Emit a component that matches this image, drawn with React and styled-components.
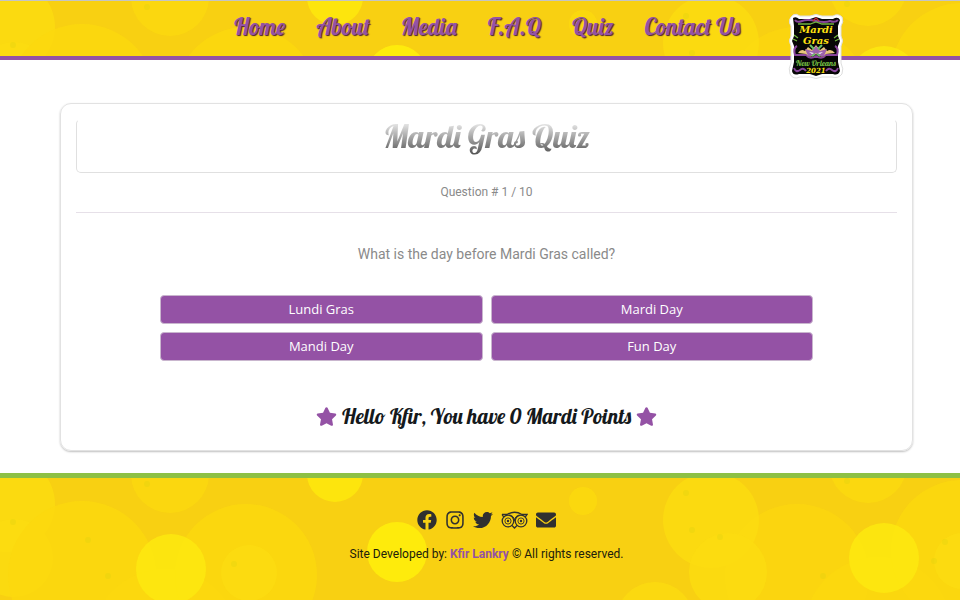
import React from "react";
import styled, { createGlobalStyle } from "styled-components";
import {
  FaFacebook,
  FaInstagram,
  FaTwitter,
  FaEnvelope,
  FaStar,
} from "react-icons/fa";

const script = `Lobster, "Liberation Serif", serif`;
const purple = "#9452a5";

const GlobalStyle = createGlobalStyle`
  * { box-sizing: border-box; }
  body {
    margin: 0;
    background: #fff;
    color: #212529;
    font-family: Roboto, sans-serif;
  }
  h1, h2, p, ul { margin: 0; padding: 0; }
`;

const Page = styled.div`
  display: flex;
  flex-direction: column;
  min-height: 100vh;
`;

const BubbleSvg = styled.svg`
  position: absolute;
  inset: 0;
  width: 100%;
  height: 100%;
  z-index: -1;
`;

const Header = styled.header`
  position: relative;
  z-index: 1;
  display: flex;
  align-items: center;
  justify-content: center;
  height: 60px;
  padding: 0 0 4px 14px;
  background: #f8d012;
  border-top: 1px solid #c4c4c4;
  border-bottom: 4px solid ${purple};
`;

const NavList = styled.ul`
  display: flex;
  align-items: center;
  gap: 31px;
  list-style: none;
`;

const NavLink = styled.a`
  color: ${purple};
  font: 23px/30px ${script};
  text-decoration: none;
  text-shadow: 1px 1px 1px #4a2038;
  white-space: nowrap;
`;

const LogoLink = styled.a`
  position: absolute;
  top: 12px;
  right: 116px;
  width: 56px;
  height: 66px;
`;

const Main = styled.main`
  padding: 43px 47px 22px 60px;
`;

const Card = styled.section`
  display: flex;
  flex-direction: column;
  padding: 15px;
  border: 1px solid #e2e2e2;
  border-radius: 11px;
  box-shadow: 0 1px 2px 0 rgba(0, 0, 0, 0.25);
  text-align: center;
`;

const TitleBox = styled.div`
  display: flex;
  align-items: flex-start;
  justify-content: center;
  height: 54px;
  border: 1px solid #e0e0e0;
  border-top-color: transparent;
  border-radius: 5px;
`;

const Title = styled.h1`
  padding: 0 4px 4px;
  font: 32px/32px ${script};
  background: linear-gradient(#e6e6e6 10%, #555 95%);
  background-clip: text;
  -webkit-background-clip: text;
  color: transparent;
`;

const Counter = styled.p`
  padding: 10px 0 11px;
  border-bottom: 1px solid #e6e0e8;
  color: #8a8a8a;
  font-size: 12px;
  line-height: 18px;
`;

const Question = styled.h2`
  padding: 31px 0;
  color: #8a8a8a;
  font-size: 14px;
  font-weight: 400;
  line-height: 20px;
`;

const Options = styled.div`
  display: grid;
  grid-template-columns: 1fr 1fr;
  gap: 8px;
  padding: 0 84px;
`;

const Option = styled.button`
  height: 29px;
  padding: 0 0 2px;
  border: 1px solid #c9b6ce;
  border-radius: 4px;
  background: ${purple};
  color: #fff;
  font: 13px/20px "Open Sans", "Noto Sans", sans-serif;
  cursor: pointer;
`;

const Score = styled.p`
  display: flex;
  align-items: center;
  justify-content: center;
  gap: 5px;
  padding: 41px 0 5px;
  color: #15191c;
  font: 21px/28px ${script};

  svg {
    color: ${purple};
    font-size: 21px;
  }
`;

const Footer = styled.footer`
  position: relative;
  z-index: 1;
  flex: 1;
  display: flex;
  flex-direction: column;
  align-items: center;
  gap: 15px;
  padding: 31px 0 35px 13px;
  border-top: 5px solid #8dc045;
  background: #f8d012;
`;

const Socials = styled.div`
  display: flex;
  align-items: center;
  gap: 8px;
  height: 21px;
`;

const SocialLink = styled.a`
  display: flex;
  color: #303030;
  font-size: 20px;
`;

const Credit = styled.p`
  color: #20200c;
  font-size: 12px;
  line-height: 18px;
`;

const AuthorLink = styled.a`
  color: ${purple};
  font-weight: 700;
  text-decoration: none;
`;

const bubbles = [
  [7, 26, 48, "#fbdc10"],
  [14, 80, 39, "#fbdc10"],
  [82, 97, 74, "#fcd80e"],
  [170, -4, 39, "#fcd80f"],
  [165, 165, 74, "#fcd80e"],
  [246, 97, 71, "#fcd80e"],
  [171, 91, 35, "#fde90f"],
  [249, 95, 28, "#fbdc10"],
  [335, -4, 28, "#fee90d"],
  [397, 74, 30, "#fff00c"],
  [583, 23, 14, "#fcd90e"],
  [655, 143, 39, "#fbdb10"],
  [797, 98, 72, "#fcd60f"],
  [711, 42, 48, "#fbdc10"],
  [728, 94, 39, "#fbdc10"],
  [868, -14, 39, "#fbd90f"],
  [878, 153, 74, "#fcd80e"],
  [962, 73, 71, "#fcd80e"],
  [884, 80, 35, "#fde90f"],
  [962, 83, 28, "#fbdc10"],
];

const specks = [
  [13, 44],
  [88, 62],
  [108, 98],
  [147, 6],
  [234, 86],
  [686, 15],
  [692, 52],
  [720, 59],
  [823, 98],
  [847, 3],
  [945, 64],
  [934, 83],
];

function Bubbles() {
  return (
    <BubbleSvg aria-hidden="true">
      {bubbles.map(([x, y, r, fill]) => (
        <circle key={`${x}-${y}`} cx={x} cy={y} r={r} fill={fill} opacity="0.85" />
      ))}
      {specks.map(([x, y]) => (
        <circle key={`${x}-${y}`} cx={x} cy={y} r="3" fill="#d9cf10" opacity="0.3" />
      ))}
    </BubbleSvg>
  );
}

const LogoText = styled.text`
  font-family: "DejaVu Serif", serif;
  font-weight: bold;
  font-style: italic;
  text-anchor: middle;
`;

const LogoScript = styled(LogoText)`
  font-family: ${script};
  font-weight: normal;
  font-style: normal;
`;

function Logo() {
  return (
    <svg viewBox="0 0 56 66" width="56" height="66" role="img" aria-label="Mardi Gras New Orleans 2021">
      <path
        d="M5 2 Q8 0 12 3 L22 3 Q28 0 34 3 L45 3 Q50 0 54 4 Q56 9 53 13 V23 Q56 28 53 33 V50 Q56 56 54 61 Q50 66 44 64 L34 64 Q28 67 22 64 L12 64 Q5 67 2 61 Q0 56 3 50 V33 Q0 28 3 23 V13 Q-1 7 5 2Z"
        fill="#fff"
        stroke="#dedede"
        strokeWidth="1"
      />
      <path
        d="M5 5 Q8 3 11 6 H22 L28 4 L34 6 H45 Q50 3 52 7 L50 13 V23 L52 28 L50 33 V49 L52 58 Q50 63 45 61 H34 L28 63 L22 61 H11 Q5 63 4 58 L6 49 V33 L4 28 L6 23 V13 Z"
        fill="#060606"
      />
      <g fill="none" strokeWidth="1.3">
        <path d="M7 7 Q9 10 14 8 T28 8 T42 8 Q47 10 50 7" stroke="#88459b" strokeWidth="2" />
        <path d="M10 11 H22 L28 9 L34 11 H46" stroke="#70b33e" />
        <path d="M25 8 L28 5 L31 8" stroke="#c12e38" />
        <path d="M5 26 L9 28 M6 22 L10 25 M51 26 L47 28 M50 22 L46 25" stroke="#70b33e" />
        <path d="M9 33 Q5 35 7 42 H18 Q22 47 28 43 Q34 47 38 42 H49 Q51 35 47 33" stroke="#88459b" strokeWidth="2" />
        <path d="M6 55 Q8 60 12 57 Q15 54 18 58 M50 55 Q48 60 44 57 Q41 54 38 58" stroke="#88459b" strokeWidth="2" />
      </g>
      <LogoText x="28" y="20" fontSize="10" fill="#ffe111">Mardi</LogoText>
      <LogoText x="28" y="31" fontSize="10" fill="#ffe111">Gras</LogoText>
      <path d="M10 40 Q13 35 17 38 L20 34 L24 37 L28 32 L32 37 L36 34 L39 38 Q43 35 47 40 L38 41 Q34 46 28 41 Q22 46 18 41 Z" fill="#e9c67d" />
      <path d="M17 36 L24 38 L28 33 L32 38 L39 36 L36 43 Q31 44 28 40 Q24 44 20 43 Z" fill="#9d62ad" />
      <path d="M22 32 L26 36 M34 32 L30 36 M24 43 L27 41 M32 43 L29 41" stroke="#6bc06a" strokeWidth="2" />
      <path d="M21 39 l5 1 -2 1Z M35 39 l-5 1 2 1Z" fill="#fff" />
      <LogoScript x="28" y="53" fontSize="8" fill="#72bd43">New Orleans</LogoScript>
      <LogoText x="28" y="60" fontSize="7" fill="#ffe111">2021</LogoText>
    </svg>
  );
}

function TripadvisorIcon() {
  return (
    <svg width="27" height="18" viewBox="0 0 27 18" fill="none" stroke="currentColor" aria-hidden="true">
      <path d="M1 3.500 H6 Q13.500 -1 21 3.500 H26 L24 6.500" strokeWidth="1.300" />
      <path d="M1 3.500 L3 6.500 M11 14.500 L13.500 17 L16 14.500" strokeWidth="1.300" />
      <circle cx="7" cy="10" r="5.800" strokeWidth="1.300" />
      <circle cx="20" cy="10" r="5.800" strokeWidth="1.300" />
      <circle cx="7" cy="10" r="3.100" strokeWidth="0.900" />
      <circle cx="20" cy="10" r="3.100" strokeWidth="0.900" />
      <circle cx="7" cy="10" r="1.200" fill="currentColor" stroke="none" />
      <circle cx="20" cy="10" r="1.200" fill="currentColor" stroke="none" />
      <path d="M8.500 4 Q13 4.500 13.500 10 Q14 4.500 18.500 4" strokeWidth="1" />
    </svg>
  );
}

const pages = ["Home", "About", "Media", "F.A.Q", "Quiz", "Contact Us"];
const answers = ["Lundi Gras", "Mardi Day", "Mandi Day", "Fun Day"];
const socials = [
  ["Facebook", <FaFacebook />],
  ["Instagram", <FaInstagram />],
  ["Twitter", <FaTwitter />],
  ["Tripadvisor", <TripadvisorIcon />],
  ["Email", <FaEnvelope />],
];

export default function App() {
  return (
    <Page>
      <GlobalStyle />
      <Header>
        <Bubbles />
        <nav>
          <NavList>
            {pages.map((page) => (
              <li key={page}>
                <NavLink href="#">{page}</NavLink>
              </li>
            ))}
          </NavList>
        </nav>
        <LogoLink href="#" aria-label="Mardi Gras home">
          <Logo />
        </LogoLink>
      </Header>
      <Main>
        <Card>
          <TitleBox>
            <Title>Mardi Gras Quiz</Title>
          </TitleBox>
          <Counter>Question # 1 / 10</Counter>
          <Question>What is the day before Mardi Gras called?</Question>
          <Options>
            {answers.map((answer) => (
              <Option key={answer} type="button">
                {answer}
              </Option>
            ))}
          </Options>
          <Score>
            <FaStar />
            <span>Hello Kfir, You have 0 Mardi Points</span>
            <FaStar />
          </Score>
        </Card>
      </Main>
      <Footer>
        <Bubbles />
        <Socials>
          {socials.map(([name, icon]) => (
            <SocialLink key={name} href="#" aria-label={name}>
              {icon}
            </SocialLink>
          ))}
        </Socials>
        <Credit>
          Site Developed by: <AuthorLink href="#">Kfir Lankry</AuthorLink> © All rights reserved.
        </Credit>
      </Footer>
    </Page>
  );
}
